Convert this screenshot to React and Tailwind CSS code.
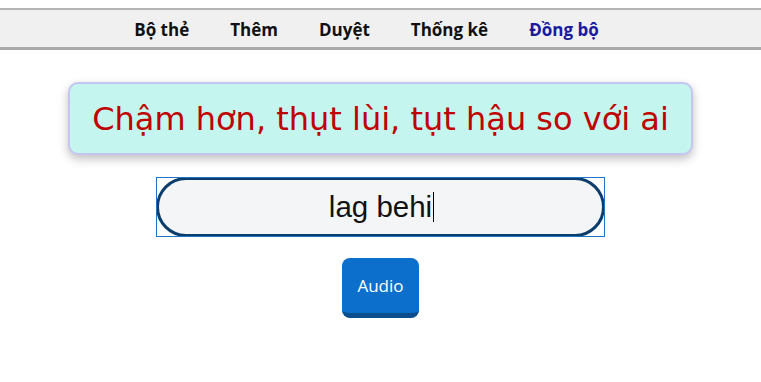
import React from 'react';

const navItems = [
  { label: 'Bộ thẻ', active: false },
  { label: 'Thêm', active: false },
  { label: 'Duyệt', active: false },
  { label: 'Thống kê', active: false },
  { label: 'Đồng bộ', active: true },
];

export default function App() {
  return (
    <div className="min-h-[382px] bg-white font-['Open_Sans',sans-serif]">
      <div className="h-2 bg-white" />
      <nav className="flex h-[42px] items-center justify-center gap-[41px] border-t-2 border-b-[3px] border-t-[#b4b4b4] border-b-[#a9a9a9] bg-[#f0f0f0] pr-[28px] pt-[2px]">
        {navItems.map((item) => (
          <span
            key={item.label}
            className={
              item.active
                ? 'text-[17px] font-bold text-[#1a1aa0]'
                : 'text-[17px] font-bold text-[#111]'
            }
          >
            {item.label}
          </span>
        ))}
      </nav>

      <main className="flex flex-col items-center">
        <div className="mt-[32px] flex h-[73px] w-[625px] items-center justify-center rounded-[10px] border-2 border-[#c6c5f2] bg-[#c4f5ee] shadow-[0_4px_10px_rgba(0,0,0,0.25)]">
          <span className="font-['DejaVu_Sans',sans-serif] text-[32px] text-[#c00000]">
            Chậm hơn, thụt lùi, tụt hậu so với ai
          </span>
        </div>

        <div className="mt-[22px] h-[60px] w-[449px] outline outline-1 -outline-offset-1 outline-[#1f74c4]">
          <div className="flex h-full w-full items-center justify-center rounded-full border-[3px] border-[#0b3e6c] bg-[#f3f5f7] pl-[2px]">
            <span className="font-['Liberation_Sans',sans-serif] text-[29.5px] text-[#111]">lag behi</span>
            <span className="ml-px h-[30px] w-px bg-black" />
          </div>
        </div>

        <button className="mt-[21px] flex h-[60px] w-[77px] items-center justify-center rounded-[8px] border-b-[5px] border-b-[#0a4e8e] bg-[#0b6fcb] pt-[1px] text-[17px] text-white">
          Audio
        </button>
      </main>
    </div>
  );
}
